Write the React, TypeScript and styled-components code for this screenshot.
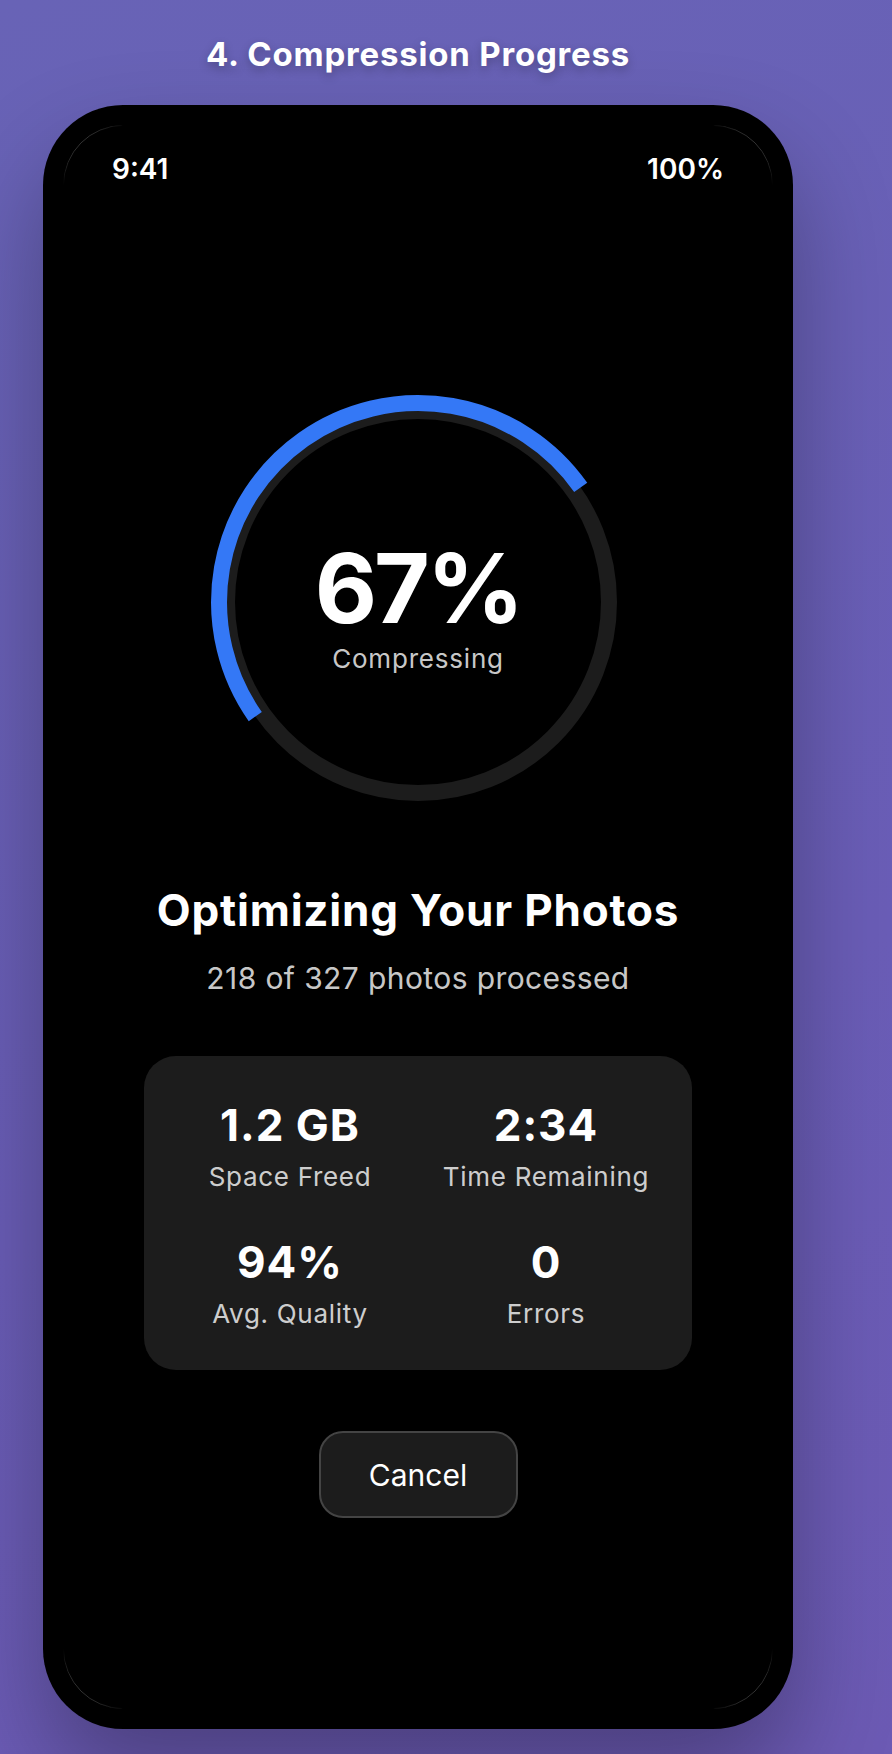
import styled, { createGlobalStyle } from "styled-components";

const GlobalStyle = createGlobalStyle`
  html, body {
    margin: 0;
    padding: 0;
  }
  body {
    background: linear-gradient(160deg, #6863b6 0%, #6a5db7 60%, #6c5ab4 100%);
    font-family: Inter, "Noto Sans", sans-serif;
    color: #ffffff;
    -webkit-font-smoothing: antialiased;
  }
`;

const Page = styled.div`
  min-height: 1754px;
  padding-top: 35px;
  box-sizing: border-box;
  overflow: hidden;
`;

const Section = styled.section`
  width: 750px;
  margin-left: 43px;
`;

const ScreenTitle = styled.h2`
  margin: 0 0 31px;
  font-size: 33px;
  line-height: 39px;
  font-weight: 700;
  letter-spacing: 0.8px;
  text-align: center;
  text-shadow: 0 4px 10px rgba(0, 0, 0, 0.25);
`;

const Phone = styled.div`
  width: 750px;
  height: 1624px;
  padding: 20px;
  box-sizing: border-box;
  background: #000;
  border-radius: 80px;
  box-shadow: 0 50px 100px rgba(0, 0, 0, 0.3);
`;

const Screen = styled.div`
  position: relative;
  height: 100%;
  background: #000;
  border-radius: 60px;
  display: flex;
  flex-direction: column;

  &::after {
    content: "";
    position: absolute;
    inset: 0;
    border: 1px solid rgba(255, 255, 255, 0.4);
    border-radius: 60px;
    pointer-events: none;
    mask-image: linear-gradient(
        to right,
        #000 0,
        transparent 60px,
        transparent calc(100% - 60px),
        #000 100%
      ),
      linear-gradient(
        to bottom,
        #000 0,
        transparent 60px,
        transparent calc(100% - 60px),
        #000 100%
      );
    mask-composite: intersect;
  }
`;

const StatusBar = styled.div`
  height: 88px;
  padding: 0 49px;
  display: flex;
  align-items: center;
  justify-content: space-between;
  font-size: 28px;
  font-weight: 600;
`;

const Content = styled.div`
  padding-top: 179px;
  display: flex;
  flex-direction: column;
  align-items: center;
`;

const RingWrap = styled.div`
  display: grid;
  place-items: center;
  width: 420px;
  height: 420px;

  & > * {
    grid-area: 1 / 1;
  }
`;

const RingLabel = styled.div`
  padding-top: 10px;
  display: flex;
  flex-direction: column;
  align-items: center;
`;

const Percent = styled.div`
  font-size: 96px;
  line-height: 96px;
  font-weight: 700;
  letter-spacing: -3px;
`;

const RingCaption = styled.div`
  margin-top: 7px;
  font-size: 26px;
  line-height: 31px;
  letter-spacing: 0.8px;
  color: rgba(255, 255, 255, 0.8);
`;

const Heading = styled.h1`
  margin: 72px 0 0;
  font-size: 44px;
  line-height: 53px;
  font-weight: 700;
  letter-spacing: 0.8px;
`;

const Subheading = styled.p`
  margin: 23px 0 0;
  font-size: 30px;
  line-height: 36px;
  letter-spacing: 0.4px;
  color: rgba(255, 255, 255, 0.8);
`;

const StatsCard = styled.div`
  margin-top: 60px;
  width: 548px;
  box-sizing: border-box;
  padding: 43px 32px 40px;
  background: #1c1c1c;
  border-radius: 32px;
  display: grid;
  grid-template-columns: 1fr 1fr;
  column-gap: 28px;
  row-gap: 43px;
`;

const Stat = styled.div`
  display: flex;
  flex-direction: column;
  align-items: center;
`;

const StatValue = styled.div`
  font-size: 44px;
  line-height: 52px;
  font-weight: 700;
  letter-spacing: 1px;
`;

const StatLabel = styled.div`
  margin-top: 10px;
  font-size: 26px;
  line-height: 32px;
  letter-spacing: 0.7px;
  color: rgba(255, 255, 255, 0.8);
`;

const CancelButton = styled.button`
  margin-top: 61px;
  width: 199px;
  height: 87px;
  border: 2px solid #444;
  border-radius: 24px;
  background: #1c1c1c;
  color: #fff;
  font-family: Inter, "Noto Sans", sans-serif;
  font-size: 30px;
  cursor: pointer;
`;

const stats = [
  { value: "1.2 GB", label: "Space Freed" },
  { value: "2:34", label: "Time Remaining" },
  { value: "94%", label: "Avg. Quality" },
  { value: "0", label: "Errors" },
];

// arc end points, angles measured clockwise from 12 o'clock
const point = (deg: number, r: number) => {
  const a = (deg * Math.PI) / 180;
  return [210 + r * Math.sin(a), 210 - r * Math.cos(a)];
};

const ProgressRing = () => {
  const [x1, y1] = point(234.85, 199);
  const [x2, y2] = point(54.85, 199);
  return (
    <svg width="420" height="420" viewBox="0 0 420 420">
      <circle cx="210" cy="210" r="191" fill="none" stroke="#1c1c1c" strokeWidth="16" />
      <path
        d={`M ${x1} ${y1} A 199 199 0 0 1 ${x2} ${y2}`}
        fill="none"
        stroke="#3478f6"
        strokeWidth="16"
      />
    </svg>
  );
};

export default function App() {
  return (
    <Page>
      <GlobalStyle />
      <Section>
        <ScreenTitle>4. Compression Progress</ScreenTitle>
        <Phone>
          <Screen>
            <StatusBar>
              <span>9:41</span>
              <span>100%</span>
            </StatusBar>
            <Content>
              <RingWrap>
                <ProgressRing />
                <RingLabel>
                  <Percent>67%</Percent>
                  <RingCaption>Compressing</RingCaption>
                </RingLabel>
              </RingWrap>
              <Heading>Optimizing Your Photos</Heading>
              <Subheading>218 of 327 photos processed</Subheading>
              <StatsCard>
                {stats.map((s) => (
                  <Stat key={s.label}>
                    <StatValue>{s.value}</StatValue>
                    <StatLabel>{s.label}</StatLabel>
                  </Stat>
                ))}
              </StatsCard>
              <CancelButton>Cancel</CancelButton>
            </Content>
          </Screen>
        </Phone>
      </Section>
    </Page>
  );
}
